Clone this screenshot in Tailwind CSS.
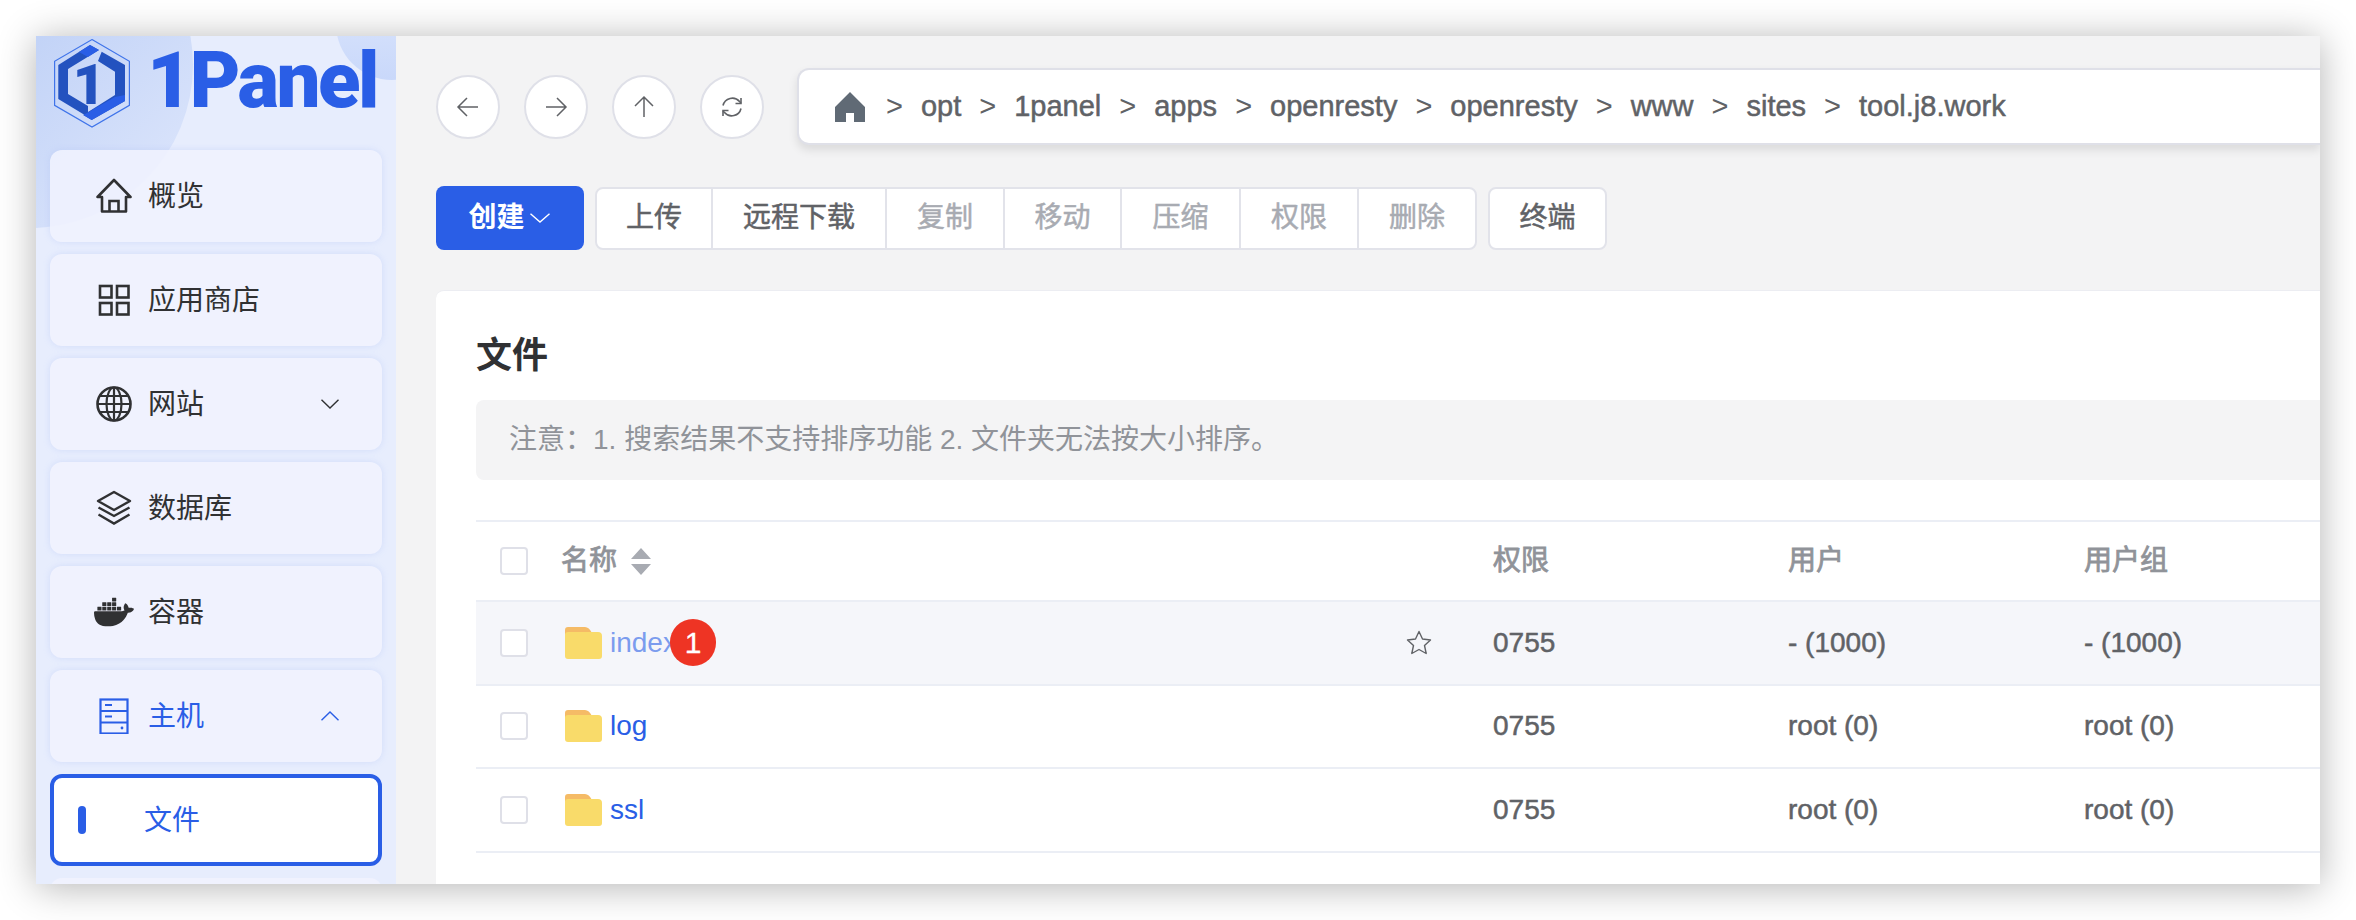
<!DOCTYPE html>
<html lang="zh-CN">
<head>
  <meta charset="UTF-8" />
  <title>1Panel 文件</title>
  <script src="https://cdn.jsdelivr.net/npm/@tailwindcss/browser@4"></script>
</head>
<body class="bg-white w-[2356px] h-[920px] overflow-hidden font-['Liberation_Sans','Noto_Sans_CJK_SC',sans-serif]">
  <div class="p-9 h-full">
    <div class="flex h-[848px] overflow-hidden shadow-[0_3px_36px_rgba(0,0,0,0.3)]">

      <!-- Sidebar -->
      <aside class="relative w-[360px] shrink-0 overflow-hidden bg-[#e7edfd]">
        <div class="absolute -left-[169px] -top-[134px] w-[326px] h-[326px] rounded-full bg-gradient-to-br from-[#a9c1f2] to-[#e0e8fc]"></div>
        <div class="absolute left-[300px] -top-[68px] w-[112px] h-[112px] rounded-full bg-gradient-to-b from-[#e0e9fd] to-[#c9d8fa]"></div>

        <div class="relative h-[114px] flex items-start pl-[18px] pt-[3px]">
          <svg class="w-[76px] h-[89px] shrink-0" viewBox="0 0 76 89" fill="none">
            <path d="M38 .6 75.4 22.3v44L38 88 .6 66.3v-44Z" stroke="#3f74ea" stroke-width="1.2" />
            <path d="M36 6 45 11 14 30V55L34 67V78L4.300 60V26Z" fill="#2352bf" />
            <path d="M36 6 45 11 34 18 25 13Z" fill="#2a5ee6" />
            <path d="M47.700 12.700 71 26V62L37.700 81 29.300 76 61 56V32.700L44 22Z" fill="#2352bf" />
            <path d="M71 56V62L37.700 81 29.300 76 61 58Z" fill="#2a5ee6" />
            <text x="35" y="65" text-anchor="middle" font-family="Roboto" font-weight="900" font-size="56" fill="#2352bf">1</text>
          </svg>
          <span class="ml-[17px] mt-[-2px] text-[#2a5ee6] text-[78px] leading-[88px] font-black tracking-[-2.5px] font-['Roboto',sans-serif]">1Panel</span>
        </div>

        <nav class="relative flex flex-col gap-3 px-[14px]">
          <a class="flex items-center h-[92px] pl-[46px] rounded-xl bg-[#f0f2fe]/90 shadow-[0_0_6px_rgba(170,190,245,0.35)] text-[#303133] text-[28px]">
            <svg class="w-9 h-9 mr-4" viewBox="0 0 36 36" fill="none" stroke="#303133" stroke-width="2.6"><path d="M1.500 19 18 2 34.500 19H30V33.500H6V19Z" stroke-linejoin="round" /><path d="M13.500 33V23H22.500V33" /></svg>
            <span class="pt-[2px]">概览</span>
          </a>
          <a class="flex items-center h-[92px] pl-[46px] rounded-xl bg-[#f0f2fe] shadow-[0_0_6px_rgba(170,190,245,0.35)] text-[#303133] text-[28px]">
            <svg class="w-9 h-9 mr-4" viewBox="0 0 36 36" fill="none" stroke="#303133" stroke-width="2.6"><rect x="4" y="4" width="11.500" height="11.500" /><rect x="21" y="4" width="11.500" height="11.500" /><rect x="4" y="21" width="11.500" height="11.500" /><rect x="21" y="21" width="11.500" height="11.500" /></svg>
            <span class="pt-[2px]">应用商店</span>
          </a>
          <a class="flex items-center h-[92px] pl-[46px] pr-[43px] rounded-xl bg-[#f0f2fe] shadow-[0_0_6px_rgba(170,190,245,0.35)] text-[#303133] text-[28px]">
            <svg class="w-9 h-9 mr-4" viewBox="0 0 36 36" fill="none" stroke="#303133" stroke-width="2.2"><circle cx="18" cy="18" r="16.500" stroke-width="2.600" /><ellipse cx="18" cy="18" rx="7.500" ry="16.500" /><path d="M18 1.500V34.500M1.500 18H34.500M4 10H32M4 26H32" /></svg>
            <span class="pt-[2px]">网站</span>
            <svg class="ml-auto w-[18px] h-[10px]" viewBox="0 0 18 10" fill="none" stroke="#303133" stroke-width="1.4"><path d="M.5.8 9 9 17.500.8" /></svg>
          </a>
          <a class="flex items-center h-[92px] pl-[46px] rounded-xl bg-[#f0f2fe] shadow-[0_0_6px_rgba(170,190,245,0.35)] text-[#303133] text-[28px]">
            <svg class="w-9 h-9 mr-4" viewBox="0 0 36 36" fill="none" stroke="#303133" stroke-width="2.4"><path d="M18 2 34 11 18 20 2 11Z" stroke-linejoin="round" /><path d="M2.500 17.500 18 26 33.500 17.500M2.500 24.500 18 33.500 33.500 24.500" /></svg>
            <span class="pt-[2px]">数据库</span>
          </a>
          <a class="flex items-center h-[92px] pl-[44px] rounded-xl bg-[#f0f2fe] shadow-[0_0_6px_rgba(170,190,245,0.35)] text-[#303133] text-[28px]">
            <svg class="w-10 h-10 mr-[14px]" viewBox="0 0 24 24" fill="#303133"><path d="M13.983 11.078h2.119a.186.186 0 00.186-.185V9.006a.186.186 0 00-.186-.186h-2.119a.185.185 0 00-.185.185v1.888c0 .102.083.185.185.185m-2.954-5.43h2.118a.186.186 0 00.186-.186V3.574a.186.186 0 00-.186-.185h-2.118a.185.185 0 00-.185.185v1.888c0 .102.082.185.185.186m0 2.716h2.118a.187.187 0 00.186-.186V6.29a.186.186 0 00-.186-.185h-2.118a.185.185 0 00-.185.185v1.887c0 .102.082.185.185.186m-2.93 0h2.12a.186.186 0 00.184-.186V6.29a.185.185 0 00-.185-.185H8.1a.185.185 0 00-.185.185v1.887c0 .102.083.185.185.186m-2.964 0h2.119a.186.186 0 00.185-.186V6.29a.185.185 0 00-.185-.185H5.136a.186.186 0 00-.186.185v1.887c0 .102.084.185.186.186m5.893 2.715h2.118a.186.186 0 00.186-.185V9.006a.186.186 0 00-.186-.186h-2.118a.185.185 0 00-.185.185v1.888c0 .102.082.185.185.185m-2.93 0h2.12a.185.185 0 00.184-.185V9.006a.185.185 0 00-.184-.186h-2.12a.185.185 0 00-.184.185v1.888c0 .102.083.185.185.185m-2.964 0h2.119a.185.185 0 00.185-.185V9.006a.185.185 0 00-.184-.186h-2.12a.186.186 0 00-.186.186v1.887c0 .102.084.185.186.185m-2.92 0h2.12a.185.185 0 00.184-.185V9.006a.185.185 0 00-.184-.186h-2.12a.185.185 0 00-.184.185v1.888c0 .102.082.185.185.185M23.763 9.89c-.065-.051-.672-.51-1.954-.51-.338.001-.676.03-1.01.087-.248-1.7-1.653-2.53-1.716-2.566l-.344-.199-.226.327c-.284.438-.49.922-.612 1.43-.23.97-.09 1.882.403 2.661-.595.332-1.55.413-1.744.42H.751a.751.751 0 00-.75.748 11.376 11.376 0 00.692 4.062c.545 1.428 1.355 2.48 2.41 3.124 1.18.723 3.1 1.137 5.275 1.137.983.003 1.963-.086 2.93-.266a12.248 12.248 0 003.823-1.389c.98-.567 1.86-1.288 2.61-2.136 1.252-1.418 1.998-2.997 2.553-4.4h.221c1.372 0 2.215-.549 2.68-1.009.309-.293.55-.65.707-1.046l.098-.288Z" /></svg>
            <span class="pt-[2px]">容器</span>
          </a>
          <a class="flex items-center h-[92px] pl-[46px] pr-[43px] rounded-xl bg-[#f0f2fe] shadow-[0_0_6px_rgba(170,190,245,0.35)] text-[#2a5ee6] text-[28px]">
            <svg class="w-9 h-9 mr-4" viewBox="0 0 36 36" fill="none" stroke="#2a5ee6" stroke-width="2.2"><rect x="4.500" y="1.500" width="27" height="34" /><path d="M4.500 13H31.500M4.500 24.500H31.500M9 7H16M9 18.500H16" /><circle cx="26" cy="30" r="1.400" fill="#2a5ee6" stroke="none" /></svg>
            <span class="pt-[2px]">主机</span>
            <svg class="ml-auto w-[18px] h-[10px]" viewBox="0 0 18 10" fill="none" stroke="#2a5ee6" stroke-width="1.4"><path d="M.5 9.200 9 1l8.500 8.200" /></svg>
          </a>
          <a class="flex items-center h-[92px] pl-6 rounded-xl bg-white border-4 border-[#2a5ee6] text-[#2a5ee6] text-[28px]">
            <span class="w-2 h-7 rounded-full bg-[#2a5ee6] mr-[58px]"></span>
            <span class="pt-[2px]">文件</span>
          </a>
          <a class="h-[92px] rounded-xl bg-[#f0f2fe]"></a>
        </nav>
      </aside>

      <!-- Main -->
      <main class="flex-1 min-w-0 flex flex-col bg-[#f3f3f4] pl-10 pt-8">
        <div class="flex items-center h-[77px]">
          <div class="flex gap-6">
            <button class="flex items-center justify-center w-16 h-16 rounded-full bg-white border-2 border-[#dfe0e8]">
              <svg class="w-6 h-6" viewBox="0 0 24 24" fill="none" stroke="#606266" stroke-width="1.5"><path d="M22 12H2M11 3l-9 9 9 9" /></svg>
            </button>
            <button class="flex items-center justify-center w-16 h-16 rounded-full bg-white border-2 border-[#dfe0e8]">
              <svg class="w-6 h-6" viewBox="0 0 24 24" fill="none" stroke="#606266" stroke-width="1.5"><path d="M2 12H22M13 3l9 9-9 9" /></svg>
            </button>
            <button class="flex items-center justify-center w-16 h-16 rounded-full bg-white border-2 border-[#dfe0e8]">
              <svg class="w-6 h-6" viewBox="0 0 24 24" fill="none" stroke="#606266" stroke-width="1.5"><path d="M12 22V2M3 11l9-9 9 9" /></svg>
            </button>
            <button class="flex items-center justify-center w-16 h-16 rounded-full bg-white border-2 border-[#dfe0e8]">
              <svg class="w-6 h-6" viewBox="0 0 24 24" fill="none" stroke="#606266" stroke-width="1.6"><path d="M3 10.500A9.500 9.500 0 0 1 19.500 6.500L21 8M21 13.500A9.500 9.500 0 0 1 4.500 17.500L3 16" /><path d="M21 3V8.500H15.500M3 21V15.500H8.500" /></svg>
            </button>
          </div>
          <div class="flex-1 flex items-center gap-[18px] h-[77px] ml-[33px] pl-[35px] bg-white border-2 border-r-0 border-[#dfe0e8] rounded-l-xl shadow-[0_5px_10px_rgba(0,0,0,0.1)] text-[#606266] text-[29px] [-webkit-text-stroke:0.5px]">
            <svg class="w-[32px] h-[32px] mr-[2px]" viewBox="0 0 32 32" fill="#606a75" stroke="none"><path d="M16 1 31 16V31H20V22H12V31H1V16Z" /></svg>
            <span class="[-webkit-text-stroke:0]">&gt;</span><span>opt</span>
            <span class="[-webkit-text-stroke:0]">&gt;</span><span>1panel</span>
            <span class="[-webkit-text-stroke:0]">&gt;</span><span>apps</span>
            <span class="[-webkit-text-stroke:0]">&gt;</span><span>openresty</span>
            <span class="[-webkit-text-stroke:0]">&gt;</span><span>openresty</span>
            <span class="[-webkit-text-stroke:0]">&gt;</span><span>www</span>
            <span class="[-webkit-text-stroke:0]">&gt;</span><span>sites</span>
            <span class="[-webkit-text-stroke:0]">&gt;</span><span>tool.j8.work</span>
          </div>
        </div>

        <div class="flex items-center h-16 mt-[41px] text-[28px] [-webkit-text-stroke:0.5px]">
          <button class="flex items-center justify-center gap-[5px] w-[148px] h-16 pr-[2px] rounded-lg bg-[#2a5ee6] text-white font-bold [-webkit-text-stroke:0]">
            创建
            <svg class="w-5 h-[10px]" viewBox="0 0 20 10" fill="none" stroke="#fff" stroke-width="1.4"><path d="M.5.8 10 9 19.500.8" /></svg>
          </button>
          <div class="flex h-[63px] ml-[11px] bg-white border-2 border-[#e2e3ea] rounded-lg divide-x-2 divide-[#e2e3ea]">
            <span class="w-[116px] flex items-center justify-center text-[#606266]">上传</span>
            <span class="w-[174px] flex items-center justify-center text-[#606266]">远程下载</span>
            <span class="w-[118px] flex items-center justify-center text-[#a8abb2]">复制</span>
            <span class="w-[117px] flex items-center justify-center text-[#a8abb2]">移动</span>
            <span class="w-[119px] flex items-center justify-center text-[#a8abb2]">压缩</span>
            <span class="w-[118px] flex items-center justify-center text-[#a8abb2]">权限</span>
            <span class="w-[116px] flex items-center justify-center text-[#a8abb2]">删除</span>
          </div>
          <span class="flex items-center justify-center w-[119px] h-[63px] ml-[11px] bg-white border-2 border-[#e2e3ea] rounded-lg text-[#606266]">终端</span>
        </div>

        <section class="flex-1 mt-10 pl-10 pt-[43px] bg-white rounded-tl-lg border-t border-[#ecedf2]">
          <h2 class="text-[36px] leading-[44px] font-bold text-[#303133]">文件</h2>
          <div class="flex items-center h-20 mt-[22px] pl-[33px] rounded-l-lg bg-[#f4f4f5] text-[28px] text-[#909399]">注意：1. 搜索结果不支持排序功能 2. 文件夹无法按大小排序。</div>

          <div class="mt-10 border-t-2 border-[#ebeef5] text-[28px]">
            <div class="grid grid-cols-[85px_932px_295px_296px_1fr] items-center h-[80px] border-b-2 border-[#ebeef5] text-[#909399] [-webkit-text-stroke:0.8px]">
              <span class="ml-6 w-7 h-7 rounded bg-white border-2 border-[#dfe0e8]"></span>
              <span class="flex items-center gap-[14px]">名称
                <svg class="w-5 h-[27px]" viewBox="0 0 20 27" fill="#a8abb2" stroke="none"><path d="M10 0 20 11H0ZM10 27 0 16H20Z" /></svg>
              </span>
              <span>权限</span><span>用户</span><span>用户组</span>
            </div>

            <div class="grid grid-cols-[85px_932px_295px_296px_1fr] items-center h-[83.5px] border-b-2 border-[#ebeef5] bg-[#f5f6fa] text-[#606266] [-webkit-text-stroke:0.5px]">
              <span class="ml-6 w-7 h-7 rounded bg-white border-2 border-[#dfe0e8]"></span>
              <div class="relative flex items-center pl-1 pr-[61px]">
                <svg class="w-[37px] h-8 mr-2" viewBox="0 0 37 32"><path d="M3 0H20Q24 0 27 6H4L0 8V3Q0 0 3 0Z" fill="#f5bb66" /><path d="M3 5H33Q37 5 37 9V29Q37 32 34 32H3Q0 32 0 29V8Q0 5 3 5Z" fill="#f9db6a" /></svg>
                <span class="text-[#7b9cee] [-webkit-text-stroke:0]">index</span>
                <span class="absolute left-[109px] top-[-3px] flex items-center justify-center w-[46px] h-[47px] rounded-full bg-[#ee3424] text-white text-[30px] [-webkit-text-stroke:0.3px]">1</span>
                <svg class="ml-auto w-[26px] h-[25px]" viewBox="0 0 26 25" fill="none" stroke="#606266" stroke-width="1.4"><path d="M13 1.500 16.500 9 24.500 10 18.500 15.500 20.200 23.500 13 19.500 5.800 23.500 7.500 15.500 1.500 10 9.500 9Z" stroke-linejoin="round" /></svg>
              </div>
              <span>0755</span><span>- (1000)</span><span>- (1000)</span>
            </div>

            <div class="grid grid-cols-[85px_932px_295px_296px_1fr] items-center h-[83.5px] border-b-2 border-[#ebeef5] text-[#606266] [-webkit-text-stroke:0.5px]">
              <span class="ml-6 w-7 h-7 rounded bg-white border-2 border-[#dfe0e8]"></span>
              <div class="flex items-center pl-1">
                <svg class="w-[37px] h-8 mr-2" viewBox="0 0 37 32"><path d="M3 0H20Q24 0 27 6H4L0 8V3Q0 0 3 0Z" fill="#f5bb66" /><path d="M3 5H33Q37 5 37 9V29Q37 32 34 32H3Q0 32 0 29V8Q0 5 3 5Z" fill="#f9db6a" /></svg>
                <span class="text-[#2a5ee6] [-webkit-text-stroke:0]">log</span>
              </div>
              <span>0755</span><span>root (0)</span><span>root (0)</span>
            </div>

            <div class="grid grid-cols-[85px_932px_295px_296px_1fr] items-center h-[83.5px] border-b-2 border-[#ebeef5] text-[#606266] [-webkit-text-stroke:0.5px]">
              <span class="ml-6 w-7 h-7 rounded bg-white border-2 border-[#dfe0e8]"></span>
              <div class="flex items-center pl-1">
                <svg class="w-[37px] h-8 mr-2" viewBox="0 0 37 32"><path d="M3 0H20Q24 0 27 6H4L0 8V3Q0 0 3 0Z" fill="#f5bb66" /><path d="M3 5H33Q37 5 37 9V29Q37 32 34 32H3Q0 32 0 29V8Q0 5 3 5Z" fill="#f9db6a" /></svg>
                <span class="text-[#2a5ee6] [-webkit-text-stroke:0]">ssl</span>
              </div>
              <span>0755</span><span>root (0)</span><span>root (0)</span>
            </div>
          </div>
        </section>
      </main>
    </div>
  </div>
</body>
</html>
